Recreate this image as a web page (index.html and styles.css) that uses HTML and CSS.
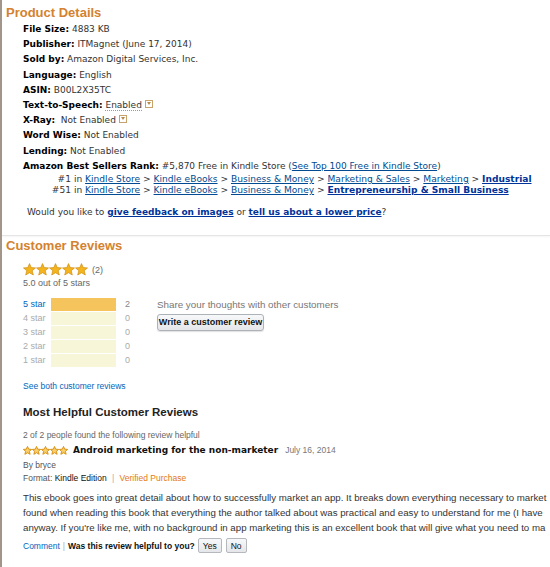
FILE: index.html
```html
<!DOCTYPE html>
<html>
<head>
<meta charset="utf-8">
<link rel="stylesheet" href="styles.css">
</head>
<body>
<div class="page">
  <section class="details">
    <h2 class="section-title">Product Details</h2>
    <ul class="detail-list">
      <li><b>File Size:</b> 4883 KB</li>
      <li><b>Publisher:</b> ITMagnet (June 17, 2014)</li>
      <li><b>Sold by:</b> Amazon Digital Services, Inc.</li>
      <li><b>Language:</b> English</li>
      <li><b>ASIN:</b> B00L2X35TC</li>
      <li><b>Text-to-Speech:</b> <span class="dotted">Enabled</span> <span class="dd"></span></li>
      <li><b>X-Ray:</b> &nbsp;Not Enabled <span class="dd"></span></li>
      <li><b>Word Wise:</b> Not Enabled</li>
      <li><b>Lending:</b> Not Enabled</li>
      <li class="rank"><b>Amazon Best Sellers Rank:</b> #5,870 Free in Kindle Store (<a href="#">See Top 100 Free in Kindle Store</a>)
        <ul class="sub-rank">
          <li><span class="num">#1</span> in <a href="#">Kindle Store</a> &gt; <a href="#">Kindle eBooks</a> &gt; <a href="#">Business &amp; Money</a> &gt; <a href="#">Marketing &amp; Sales</a> &gt; <a href="#">Marketing</a> &gt; <a class="strong" href="#">Industrial</a></li>
          <li><span class="num">#51</span> in <a href="#">Kindle Store</a> &gt; <a href="#">Kindle eBooks</a> &gt; <a href="#">Business &amp; Money</a> &gt; <a class="strong" href="#">Entrepreneurship &amp; Small Business</a></li>
        </ul>
      </li>
    </ul>
    <p class="feedback">Would you like to <a class="strong" href="#">give feedback on images</a> or <a class="strong" href="#">tell us about a lower price</a>?</p>
  </section>

  <hr class="sep">

  <section class="reviews">
    <h2 class="section-title">Customer Reviews</h2>
    <div class="summary">
      <div class="stars-line">
        <svg class="stars" width="66" height="13" viewBox="0 0 66 13">
          <defs>
            <path id="st" d="M6.5 0.6 L8.2 4.6 L12.5 4.9 L9.2 7.7 L10.3 12 L6.5 9.7 L2.7 12 L3.8 7.7 L0.5 4.9 L4.8 4.6 Z"/>
          </defs>
          <use href="#st" x="0" class="star"/>
          <use href="#st" x="13" class="star"/>
          <use href="#st" x="26" class="star"/>
          <use href="#st" x="39" class="star"/>
          <use href="#st" x="52" class="star"/>
        </svg>
        <span class="count">(2)</span>
      </div>
      <div class="avg">5.0 out of 5 stars</div>
    </div>

    <div class="hist-wrap">
      <div class="hist">
        <div class="hrow"><a class="hl" href="#">5 star</a><span class="bar"><span class="fill" style="width:100%"></span></span><span class="hc">2</span></div>
        <div class="hrow muted"><span class="hl">4 star</span><span class="bar"></span><span class="hc">0</span></div>
        <div class="hrow muted"><span class="hl">3 star</span><span class="bar"></span><span class="hc">0</span></div>
        <div class="hrow muted"><span class="hl">2 star</span><span class="bar"></span><span class="hc">0</span></div>
        <div class="hrow muted"><span class="hl">1 star</span><span class="bar"></span><span class="hc">0</span></div>
      </div>
      <div class="share">
        <div class="share-text">Share your thoughts with other customers</div>
        <button class="btn">Write a customer review</button>
      </div>
    </div>

    <a class="see-all" href="#">See both customer reviews</a>

    <h3 class="mh-title">Most Helpful Customer Reviews</h3>

    <div class="review">
      <div class="helpful">2 of 2 people found the following review helpful</div>
      <div class="rv-head">
        <svg class="mini-stars" width="45" height="9" viewBox="0 0 65 13">
          <use href="#st" x="0" class="mstar"/>
          <use href="#st" x="13" class="mstar"/>
          <use href="#st" x="26" class="mstar"/>
          <use href="#st" x="39" class="mstar"/>
          <use href="#st" x="52" class="mstar"/>
        </svg>
        <span class="rv-title">Android marketing for the non-marketer</span>
        <span class="rv-date">July 16, 2014</span>
      </div>
      <div class="by">By <a href="#">bryce</a></div>
      <div class="format">Format: <span class="dark">Kindle Edition</span> <span class="pipe">|</span> <span class="verified">Verified Purchase</span></div>
      <div class="rv-body">
        <div class="ln">This ebook goes into great detail about how to successfully market an app. It breaks down everything necessary to market</div>
        <div class="ln">found when reading this book that everything the author talked about was practical and easy to understand for me (I have</div>
        <div class="ln">anyway. If you're like me, with no background in app marketing this is an excellent book that will give what you need to ma</div>
      </div>
      <div class="rv-foot">
        <a href="#">Comment</a>
        <span class="pipe">|</span>
        <b class="ask">Was this review helpful to you?</b>
        <button class="sbtn">Yes</button>
        <button class="sbtn">No</button>
      </div>
    </div>
  </section>
</div>
</body>
</html>
```

FILE: styles.css
```css
html, body {
  margin: 0;
  padding: 0;
  overflow: hidden;
  background: #fff;
}
.page {
  width: 548px;
  height: 567px;
  border-left: 2px solid #a2968a;
  font-family: "DejaVu Sans", Verdana, sans-serif;
  color: #333;
  overflow: hidden;
}
a { color: #004b91; }
a.strong { font-weight: bold; color: #003399; }

.section-title {
  margin: 0;
  padding-left: 4px;
  font-family: "Liberation Sans", Arial, sans-serif;
  font-size: 13px;
  font-weight: bold;
  line-height: 16px;
  color: #d4822f;
}
.details { padding-top: 5px; font-size: 9px; }
.detail-list {
  list-style: none;
  margin: 1px 0 0 0;
  padding: 0 0 0 21px;
  line-height: 15.2px;
}
.detail-list b { color: #000; }
.dotted { border-bottom: 1px dotted #999; }
.dd {
  display: inline-block;
  width: 6px;
  height: 6px;
  border: 1px solid #c7a26a;
  vertical-align: 0px;
  position: relative;
}
.dd::after {
  content: "";
  position: absolute;
  left: 1px; top: 1px;
  border-left: 2px solid transparent;
  border-right: 2px solid transparent;
  border-top: 3px solid #b58b4b;
}
.sub-rank {
  list-style: none;
  margin: 0;
  padding: 0;
  line-height: 11.3px;
  font-size: 9.1px;
}
.num { display: inline-block; width: 48px; text-align: right; }

.feedback { margin: 8px 0 0 25px; line-height: 15px; }

.sep {
  border: 0;
  border-top: 1px solid #e4e4e4;
  box-shadow: 0 1px 2px #f0f0f0;
  margin: 15px 0 2px 0;
}

.reviews { font-family: "Liberation Sans", Arial, sans-serif; }
.summary { padding: 9px 0 0 21px; }
.stars-line { display: flex; align-items: center; gap: 3px; height: 14px; }
.star { fill: #f4b41e; stroke: #cf8d12; stroke-width: 0.7; }
.mstar { fill: #f8cf6a; stroke: #d9900f; stroke-width: 1.4; }
.count { font-size: 9px; color: #666; }
.avg { font-size: 9px; color: #666; line-height: 12px; }

.hist-wrap { display: flex; padding: 9px 0 0 21px; }
.hist { display: flex; flex-direction: column; gap: 1px; width: 134px; }
.hrow { display: flex; align-items: center; height: 13px; font-size: 9px; }
.hl { width: 28px; color: #0066c0; text-decoration: none; }
.muted .hl, .muted .hc { color: #aaa; }
.bar { width: 65px; height: 13px; background: #f7f6d9; display: block; }
.fill { display: block; height: 100%; background: #f6c45d; }
.hc { margin-left: 9px; color: #888; }
.share-text { font-size: 9.8px; color: #777; line-height: 12px; margin-top: 1px; }
.btn {
  margin-top: 3px;
  height: 17px;
  width: 107px;
  padding: 0;
  font-family: "Liberation Sans", Arial, sans-serif;
  font-size: 9px;
  font-weight: bold;
  color: #111;
  border: 1px solid #adb1b8;
  border-radius: 3px;
  background: linear-gradient(#f7f8fa, #e4e6e9);
  box-shadow: 0 1px 1px rgba(0,0,0,0.12);
}

.see-all {
  display: block;
  margin: 13px 0 0 21px;
  font-size: 8.5px;
  color: #0066c0;
  text-decoration: none;
  line-height: 12px;
}
.mh-title {
  margin: 13px 0 0 21px;
  font-size: 11.5px;
  font-weight: bold;
  color: #222;
  line-height: 14px;
}
.review { padding-left: 21px; font-size: 8.5px; color: #555; }
.helpful { margin-top: 10px; line-height: 12px; color: #666; }
.rv-head { display: flex; align-items: center; height: 15px; margin-top: 2px; }
.mini-stars { margin-right: 5px; }
.rv-title { font-family: "DejaVu Sans", Verdana, sans-serif; font-weight: bold; font-size: 9px; color: #111; }
.rv-date { margin-left: 7px; color: #777; font-size: 8.5px; }
.by { line-height: 13px; margin-top: 1px; color: #555; }
.by a { color: #555; text-decoration: none; }
.format { line-height: 13px; color: #555; }
.dark { color: #111; }
.pipe { color: #aaa; margin: 0 3px; }
.verified { color: #e47911; }
.rv-body { margin-top: 5px; font-size: 9.7px; color: #333; line-height: 15px; }
.ln { white-space: nowrap; }
.rv-foot { display: flex; align-items: center; margin-top: 3px; height: 16px; }
.rv-foot a { color: #0066c0; text-decoration: none; }
.ask { color: #111; }
.sbtn {
  margin-left: 4px;
  height: 15px;
  padding: 0 4px;
  font-family: "Liberation Sans", Arial, sans-serif;
  font-size: 8.5px;
  color: #111;
  border: 1px solid #b5b8bd;
  border-radius: 2px;
  background: linear-gradient(#f7f8fa, #e4e6e9);
}
.sbtn:first-of-type { margin-left: 3px; }
```
